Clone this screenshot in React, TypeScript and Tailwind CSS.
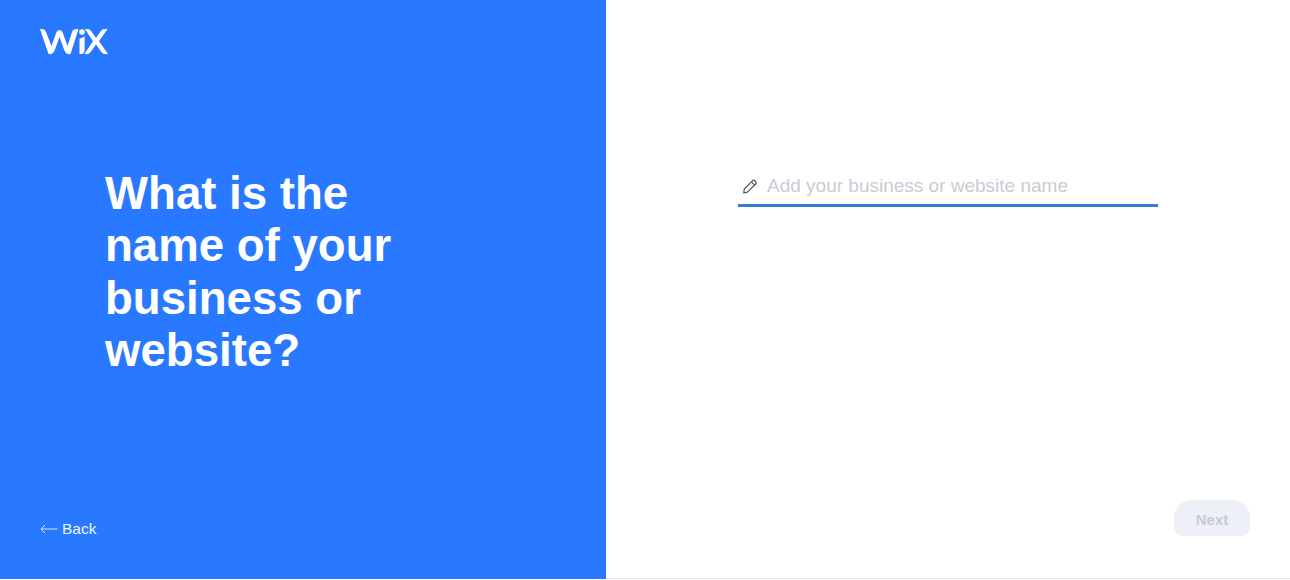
const WixLogo = () => (
  <svg width="68" height="27" viewBox="0 0 68 27" fill="none" className="block">
    <path d="M0 1C3.4 0.6 5.4 1.6 6.2 4.4L11.5 18L15.8 6C16.8 3 18 2 19.5 2C21 2 22.2 3 23.2 6L27.5 18L32 4C32.8 1.6 34.8 0.6 38.5 1L30.5 26C27 26.6 25.4 25.2 24.2 22L19.5 9L14.8 22C13.6 25.2 12 26.6 8.5 26L0 1Z" fill="white" />
    <path d="M39.5 10.5C41.6 10.2 43.2 9.4 44.6 8.2V22C44.6 25 42.8 26.4 39.5 26V10.5Z" fill="white" />
    <circle cx="42" cy="4" r="2.8" fill="white" />
    <path d="M45 1C48.4 0.6 50 1.4 51.4 3.4L56 10L60.6 3.4C62 1.4 63.8 0.6 67.5 1L59 13.2L68 26C64.4 26.5 62.6 25.6 61 23.4L56 16.4L51 23.4C49.4 25.6 47.8 26.5 44.4 26L53 13.2L45 1Z" fill="white" />
  </svg>
);

const PencilIcon = () => (
  <svg width="16" height="16" viewBox="0 0 16 16" fill="none" stroke="#55565c" strokeWidth="1.2" strokeLinejoin="round">
    <path d="M2.2 11L10.4 2.8C11.1 2.1 12.2 2.1 12.9 2.8L13.6 3.5C14.3 4.2 14.3 5.3 13.6 6L5.4 14.2L1.8 14.8L2.2 11Z" />
    <path d="M9.4 3.9L12.6 7.1" />
  </svg>
);

const App = () => {
  return (
    <div className="flex h-[580px] w-[1290px] overflow-hidden bg-white font-['Liberation_Sans',Arial,sans-serif]">
      <div className="flex h-[579px] w-[606px] shrink-0 flex-col bg-[#2879ff] pl-[40px] pr-4 text-white">
        <div className="pt-[28px]">
          <WixLogo />
        </div>
        <h1 className="mt-[113px] pl-[65px] text-[45.6px] leading-[52.3px] font-bold">
          What is the
          <br />
          name of your
          <br />
          business or
          <br />
          website?
        </h1>
        <div className="mt-auto mb-[41px] flex items-center gap-[4px] text-[15.5px] leading-[18px] text-[#eef4ff]">
          <svg width="18" height="10" viewBox="0 0 18 10" fill="none" stroke="#d6e5ff" strokeWidth="1">
            <path d="M17.5 5H1M5 1L1 5L5 9" />
          </svg>
          <span>Back</span>
        </div>
      </div>
      <div className="flex h-[579px] flex-1 flex-col border-b border-[#e4e4e4] pl-[132px]">
        <div className="mt-[172px] flex h-[35px] w-[420px] items-center gap-[9px] border-b-[3px] border-[#3a7bd8] pb-[5px] pl-[4px]">
          <PencilIcon />
          <span className="text-[19px] leading-[24px] text-[#c8ccd4]">Add your business or website name</span>
        </div>
        <div className="mt-[293px] ml-[436px] flex h-[36px] w-[76px] items-center justify-center rounded-t-[18px] rounded-b-[8px] bg-[#edf0f6] pt-[4px] text-[15px] font-bold text-[#c6cad2]">
          Next
        </div>
      </div>
    </div>
  );
};

export default App;
